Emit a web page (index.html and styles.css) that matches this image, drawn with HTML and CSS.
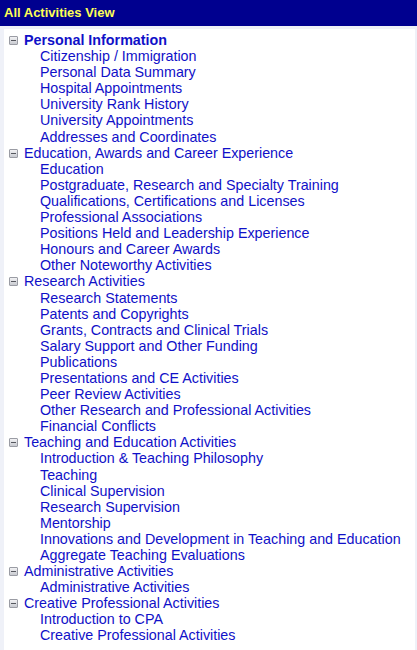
FILE: index.html
```html
<!DOCTYPE html>
<html>
<head>
<meta charset="utf-8">
<link rel="stylesheet" href="styles.css">
</head>
<body>
<div class="header">All Activities View</div>
<div class="panel">
  <ul class="tree">
    <li class="section">
      <div class="sec-title bold"><span class="toggle"></span>Personal Information</div>
      <ul class="items">
        <li>Citizenship / Immigration</li>
        <li>Personal Data Summary</li>
        <li>Hospital Appointments</li>
        <li>University Rank History</li>
        <li>University Appointments</li>
        <li>Addresses and Coordinates</li>
      </ul>
    </li>
    <li class="section">
      <div class="sec-title"><span class="toggle"></span>Education, Awards and Career Experience</div>
      <ul class="items">
        <li>Education</li>
        <li>Postgraduate, Research and Specialty Training</li>
        <li>Qualifications, Certifications and Licenses</li>
        <li>Professional Associations</li>
        <li>Positions Held and Leadership Experience</li>
        <li>Honours and Career Awards</li>
        <li>Other Noteworthy Activities</li>
      </ul>
    </li>
    <li class="section">
      <div class="sec-title"><span class="toggle"></span>Research Activities</div>
      <ul class="items">
        <li>Research Statements</li>
        <li>Patents and Copyrights</li>
        <li>Grants, Contracts and Clinical Trials</li>
        <li>Salary Support and Other Funding</li>
        <li>Publications</li>
        <li>Presentations and CE Activities</li>
        <li>Peer Review Activities</li>
        <li>Other Research and Professional Activities</li>
        <li>Financial Conflicts</li>
      </ul>
    </li>
    <li class="section">
      <div class="sec-title"><span class="toggle"></span>Teaching and Education Activities</div>
      <ul class="items">
        <li>Introduction &amp; Teaching Philosophy</li>
        <li>Teaching</li>
        <li>Clinical Supervision</li>
        <li>Research Supervision</li>
        <li>Mentorship</li>
        <li>Innovations and Development in Teaching and Education</li>
        <li>Aggregate Teaching Evaluations</li>
      </ul>
    </li>
    <li class="section">
      <div class="sec-title"><span class="toggle"></span>Administrative Activities</div>
      <ul class="items">
        <li>Administrative Activities</li>
      </ul>
    </li>
    <li class="section">
      <div class="sec-title"><span class="toggle"></span>Creative Professional Activities</div>
      <ul class="items">
        <li>Introduction to CPA</li>
        <li>Creative Professional Activities</li>
      </ul>
    </li>
  </ul>
</div>
</body>
</html>
```
FILE: styles.css
```css
html, body {
  margin: 0;
  padding: 0;
  background: #eff1f8;
  font-family: "Liberation Sans", Arial, sans-serif;
}
.header {
  height: 26px;
  line-height: 25px;
  background: #00008f;
  color: #ffff55;
  font-weight: bold;
  font-size: 13px;
  padding-left: 4px;
}
.panel {
  margin: 3px 2px 0 4px;
  background: #ffffff;
  padding: 3px 0 6px 0;
}
.tree, .items {
  list-style: none;
  margin: 0;
  padding: 0;
}
.sec-title, .items li {
  font-size: 14.3px;
  line-height: 16.1px;
  color: #1010c8;
  white-space: nowrap;
}
.sec-title {
  display: flex;
  align-items: center;
  padding-left: 5px;
}
.sec-title.bold {
  font-weight: bold;
}
.items li {
  padding-left: 36px;
}
.toggle {
  box-sizing: border-box;
  width: 9px;
  height: 9px;
  margin-right: 6px;
  margin-top: 1px;
  border: 1px solid #9a9ca4;
  border-radius: 1px;
  background: linear-gradient(#f2f2f4, #c8cad0);
  position: relative;
  flex: none;
}
.toggle::after {
  content: "";
  position: absolute;
  left: 1px;
  right: 1px;
  top: 3px;
  height: 1px;
  background: #55575e;
}
```
